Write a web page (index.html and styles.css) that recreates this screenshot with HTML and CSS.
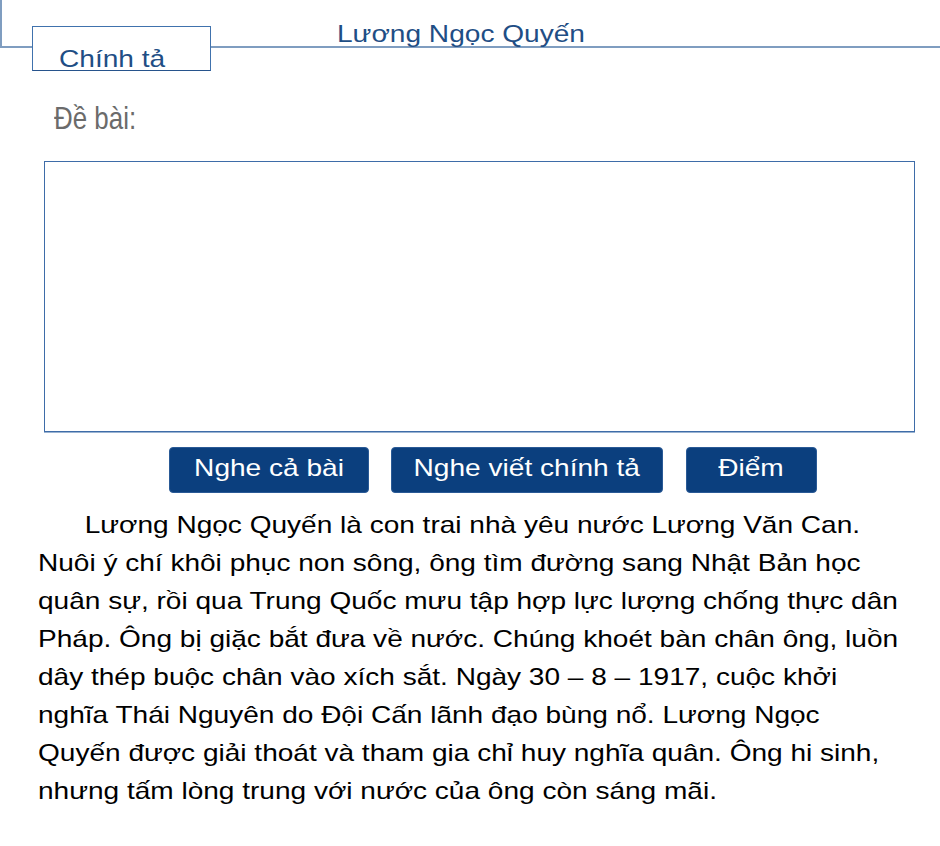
FILE: index.html
```html
<!DOCTYPE html>
<html lang="vi">
<head>
<meta charset="utf-8">
<title>Chính tả - Lương Ngọc Quyến</title>
<link rel="stylesheet" href="styles.css">
</head>
<body>
<div class="page">
  <header class="topbar">
    <div class="tab"><span class="wide">Chính tả</span></div>
    <h1 class="title"><span class="wide">Lương Ngọc Quyến</span></h1>
  </header>
  <div class="prompt">Đề bài:</div>
  <div class="answer-box"></div>
  <div class="actions">
    <button class="btn btn-all"><span class="label">Nghe cả bài</span></button>
    <button class="btn btn-dictate"><span class="label">Nghe viết chính tả</span></button>
    <button class="btn btn-score"><span class="label">Điểm</span></button>
  </div>
  <p class="passage">Lương Ngọc Quyến là con trai nhà yêu nước Lương Văn Can. Nuôi ý chí khôi phục non sông, ông tìm đường sang Nhật Bản học quân sự, rồi qua Trung Quốc mưu tập hợp lực lượng chống thực dân Pháp. Ông bị giặc bắt đưa về nước. Chúng khoét bàn chân ông, luồn dây thép buộc chân vào xích sắt. Ngày 30 – 8 – 1917, cuộc khởi nghĩa Thái Nguyên do Đội Cấn lãnh đạo bùng nổ. Lương Ngọc Quyến được giải thoát và tham gia chỉ huy nghĩa quân. Ông hi sinh, nhưng tấm lòng trung với nước của ông còn sáng mãi.</p>
</div>
</body>
</html>
```

FILE: styles.css
```css
html, body {
  margin: 0;
  padding: 0;
  background: #ffffff;
}

body {
  font-family: "Liberation Sans", Arial, sans-serif;
  width: 940px;
  height: 846px;
  overflow: hidden;
}

.page {
  display: flex;
  flex-direction: column;
}

.wide {
  display: inline-block;
  transform: scaleX(1.17);
  transform-origin: left center;
  white-space: nowrap;
}

.topbar {
  position: relative;
  height: 46px;
  border-left: 2px solid #7f9dc0;
  border-bottom: 2px solid #7f9dc0;
  box-sizing: content-box;
}

.tab {
  position: absolute;
  left: 30px;
  top: 26px;
  width: 179px;
  height: 45px;
  box-sizing: border-box;
  background: #ffffff;
  border: 1px solid #4072ad;
  border-bottom-color: #27538c;
  color: #1f4e85;
  font-size: 24px;
  line-height: 26px;
  padding: 19px 0 0 26px;
}

.title {
  margin: 0;
  position: absolute;
  left: 335px;
  top: 19px;
  font-weight: normal;
  font-size: 24px;
  line-height: 30px;
  color: #1f4e85;
}

.prompt {
  margin: 53px 0 0 54px;
  font-size: 32px;
  line-height: 34px;
  color: #6b6b6b;
  transform: scaleX(0.81);
  transform-origin: left center;
}

.answer-box {
  margin: 26px 0 0 44px;
  width: 871px;
  height: 271px;
  box-sizing: border-box;
  border: 1px solid #3e6ca8;
  box-shadow: 0 1px 0 #9ab3d2;
}

.actions {
  display: flex;
  gap: 22px;
  margin: 15px 0 0 169px;
}

.btn {
  height: 46px;
  border: 1px solid #2a5a96;
  border-radius: 4px;
  background: #0b3f7e;
  color: #ffffff;
  font-family: "Liberation Sans", Arial, sans-serif;
  font-size: 24px;
  line-height: 40px;
  padding: 0 0 4px;
  box-sizing: border-box;
  cursor: pointer;
}

.btn .label {
  display: inline-block;
  transform: scaleX(1.17);
  white-space: nowrap;
}

.btn-all { width: 200px; }
.btn-dictate { width: 272px; margin-right: 1px; }
.btn-score { width: 131px; }

.passage {
  margin: 13px 0 0 38px;
  width: 742px;
  text-indent: 40px;
  font-size: 24px;
  line-height: 38px;
  color: #000000;
  transform: scaleX(1.168);
  transform-origin: left top;
}
```
